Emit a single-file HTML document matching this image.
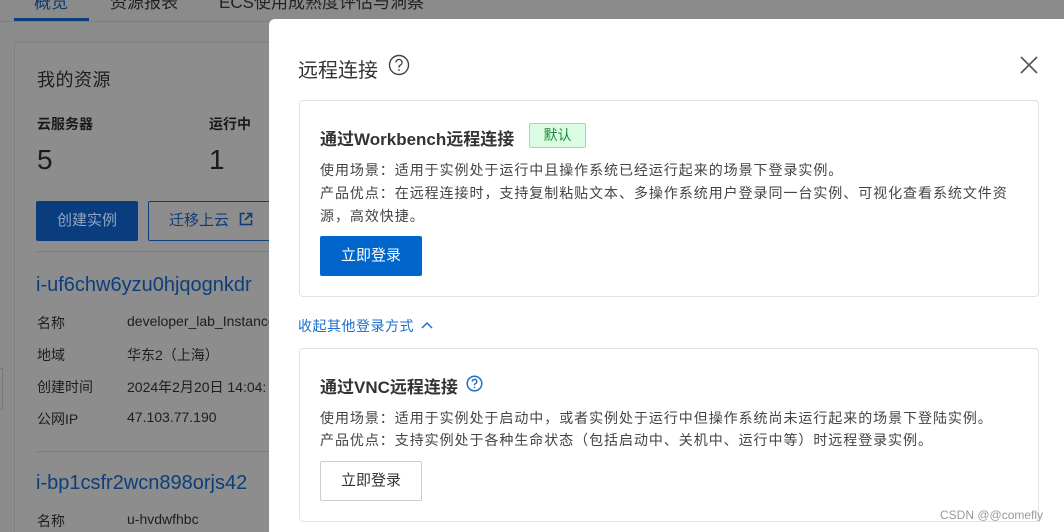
<!DOCTYPE html>
<html style="width:1064px;height:532px;overflow:hidden"><head><meta charset="utf-8"><style>
*{margin:0;padding:0;box-sizing:border-box}
body{width:1064px;height:532px;overflow:hidden;background:#8b8b8b;font-family:"Liberation Sans","Noto Sans CJK SC",sans-serif;position:relative;color:#1c1c1c}
.a{position:absolute;white-space:nowrap}
.lp{color:#1e1e1e;font-size:14px}
.drawer{position:absolute;left:269px;top:19px;width:795px;height:513px;background:#fff;border-radius:6px 0 0 0}
.card{position:absolute;border:1px solid #e2e2e2;border-radius:4px;background:#fff}
.t{font-size:14px;color:#444;letter-spacing:0.95px}
</style></head><body>
<div class="a" style="left:34px;top:-12px;font-size:17px;color:#0d3a73">概览</div>
<div class="a" style="left:110px;top:-12px;font-size:17px;color:#222">资源报表</div>
<div class="a" style="left:219px;top:-12px;font-size:17px;color:#222">ECS使用成熟度评估与洞察</div>
<div class="a" style="left:0;top:21px;width:269px;height:1px;background:#7e7e7e"></div>
<div class="a" style="left:14px;top:18px;width:75px;height:3px;background:#0b3d7a"></div>
<div class="a" style="left:14px;top:42px;width:255px;height:490px;border:1px solid #7f7f7f;border-right:none;border-bottom:none;border-radius:4px 0 0 0;background:#8d8d8d"></div>
<div class="a" style="left:0;top:368px;width:3px;height:42px;border:1px solid #777;border-left:none"></div>
<div class="a" style="left:37px;top:66px;font-size:18px;color:#1e1e1e;letter-spacing:0.5px">我的资源</div>
<div class="a" style="left:37px;top:114px;font-size:14px;font-weight:bold;color:#1a1a1a">云服务器</div>
<div class="a" style="left:209px;top:114px;font-size:14px;font-weight:bold;color:#1a1a1a">运行中</div>
<div class="a" style="left:37px;top:144px;font-size:28px;color:#1a1a1a">5</div>
<div class="a" style="left:209px;top:144px;font-size:28px;color:#1a1a1a">1</div>
<div class="a" style="left:36px;top:201px;width:102px;height:40px;background:#0a3d7e;border-radius:2px;color:#8fa6c4;font-size:15px;text-align:center;line-height:40px">创建实例</div>
<div class="a" style="left:148px;top:201px;width:130px;height:40px;border:1px solid #0d3f7e;border-radius:2px;color:#0f3c72;font-size:15px;line-height:38px;padding-left:20px">迁移上云 <svg width="14" height="14" viewBox="0 0 14 14" style="vertical-align:-1px;margin-left:6px"><path d="M6 1.5H1.5V12.5H12.5V8M8 1.5H12.5V6M12.5 1.5L6 8" fill="none" stroke="#0f3c72" stroke-width="1.6"/></svg></div>
<div class="a" style="left:36px;top:251px;width:233px;height:1px;background:#7e7e7e"></div>
<div class="a" style="left:36px;top:274px;font-size:20px;color:#0d3e7c">i-uf6chw6yzu0hjqognkdr</div>
<div class="a lp" style="left:37px;top:313px">名称</div><div class="a lp" style="left:127px;top:313px">developer_lab_Instance</div>
<div class="a lp" style="left:37px;top:345px">地域</div><div class="a lp" style="left:127px;top:345px">华东2（上海）</div>
<div class="a lp" style="left:37px;top:377px">创建时间</div><div class="a lp" style="left:127px;top:377px">2024年2月20日 14:04:</div>
<div class="a lp" style="left:37px;top:409px">公网IP</div><div class="a lp" style="left:127px;top:409px">47.103.77.190</div>
<div class="a" style="left:36px;top:451px;width:233px;height:1px;background:#7e7e7e"></div>
<div class="a" style="left:36px;top:472px;font-size:20px;color:#0d3e7c">i-bp1csfr2wcn898orjs42</div>
<div class="a lp" style="left:37px;top:511px">名称</div><div class="a lp" style="left:127px;top:511px">u-hvdwfhbc</div>

<div class="drawer"></div>
<div class="a" style="left:298px;top:54px;font-size:20px;color:#333">远程连接</div>
<svg class="a" style="left:388px;top:54px" width="22" height="22" viewBox="0 0 22 22"><circle cx="11" cy="11" r="9.5" fill="none" stroke="#444" stroke-width="1.4"/><path d="M8 8.5a3 3 0 1 1 4.2 2.7c-.8.4-1.2 1-1.2 1.8v.6" fill="none" stroke="#444" stroke-width="1.4"/><circle cx="11" cy="16" r="0.9" fill="#444"/></svg>
<svg class="a" style="left:1020px;top:56px" width="18" height="18" viewBox="0 0 18 18"><path d="M1 1L17 17M17 1L1 17" stroke="#555" stroke-width="1.6"/></svg>

<div class="card" style="left:299px;top:100px;width:740px;height:197px"></div>
<div class="a" style="left:320px;top:125px;font-size:17px;font-weight:bold;color:#333">通过Workbench远程连接</div>
<div class="a" style="left:529px;top:123px;width:57px;height:25px;background:#dbfbe2;border:1px solid #8ee6a4;border-radius:2px;color:#1b8a3a;font-size:14px;text-align:center;line-height:23px">默认</div>
<div class="a t" style="left:320px;top:160px">使用场景：适用于实例处于运行中且操作系统已经运行起来的场景下登录实例。</div>
<div class="a t" style="left:320px;top:183px">产品优点：在远程连接时，支持复制粘贴文本、多操作系统用户登录同一台实例、可视化查看系统文件资</div>
<div class="a t" style="left:320px;top:206px">源，高效快捷。</div>
<div class="a" style="left:320px;top:236px;width:102px;height:40px;background:#0066cc;border-radius:2px;color:#fff;font-size:15px;text-align:center;line-height:40px">立即登录</div>

<div class="a" style="left:298px;top:316px;font-size:14px;color:#1b6fcf;letter-spacing:0.5px">收起其他登录方式 <svg width="14" height="10" viewBox="0 0 14 10" style="vertical-align:1px;margin-left:2px"><path d="M2 8L7 3L12 8" fill="none" stroke="#1b6fcf" stroke-width="1.5"/></svg></div>

<div class="card" style="left:299px;top:348px;width:740px;height:174px"></div>
<div class="a" style="left:320px;top:373px;font-size:17px;font-weight:bold;color:#333">通过VNC远程连接</div>
<svg class="a" style="left:466px;top:375px" width="17" height="17" viewBox="0 0 17 17"><circle cx="8.5" cy="8.5" r="7.3" fill="none" stroke="#1b6fcf" stroke-width="1.5"/><path d="M6.3 6.6a2.2 2.2 0 1 1 3.1 2c-.6.3-.9.7-.9 1.3v.4" fill="none" stroke="#1b6fcf" stroke-width="1.4"/><circle cx="8.5" cy="12.4" r="0.8" fill="#1b6fcf"/></svg>
<div class="a t" style="left:320px;top:408px">使用场景：适用于实例处于启动中，或者实例处于运行中但操作系统尚未运行起来的场景下登陆实例。</div>
<div class="a t" style="left:320px;top:430px">产品优点：支持实例处于各种生命状态（包括启动中、关机中、运行中等）时远程登录实例。</div>
<div class="a" style="left:320px;top:461px;width:102px;height:40px;background:#fff;border:1px solid #ccc;border-radius:2px;color:#333;font-size:15px;text-align:center;line-height:38px">立即登录</div>

<div class="a" style="left:940px;top:508px;font-size:12px;color:#999">CSDN @@comefly</div>
</body></html>
